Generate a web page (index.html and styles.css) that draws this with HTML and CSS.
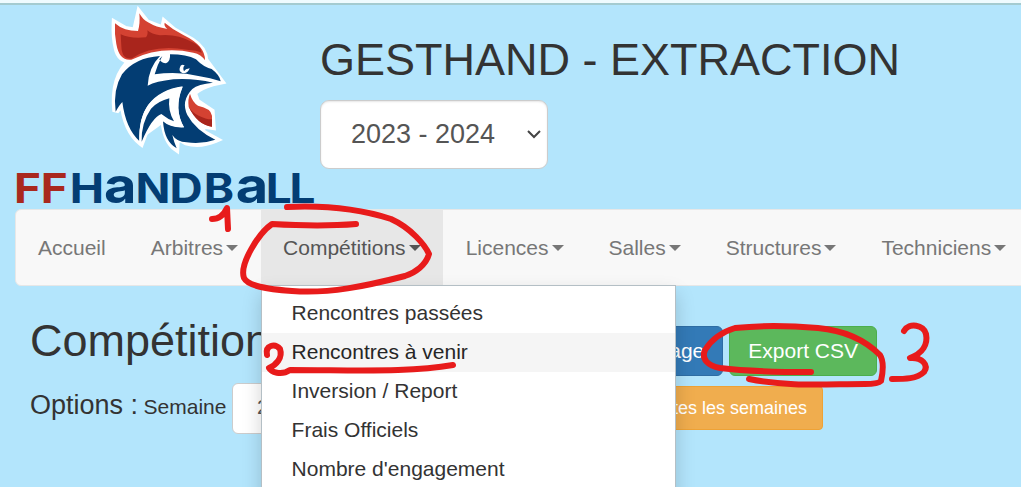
FILE: index.html
```html
<!DOCTYPE html>
<html lang="fr">
<head>
<meta charset="utf-8">
<title>Gesthand - Extraction</title>
<link rel="stylesheet" href="styles.css">
</head>
<body>
<div class="page">
  <header class="header">
    <svg class="logo" viewBox="0 0 300 204" role="img" aria-label="FFHandball">
      <g transform="translate(85 -5) scale(.33333)">
        <path class="halo" d="M45 70L76 88 106 93 118 40 140 68 190 87 194 68 222 92 275 122Q313 146 315 181L362 244 338 249Q302 259 280 278L290 305 334 335 337 380 315 377 300 365 308 398 346 419 Q300 438 258 426L230 410 228 445Q198 424 192 367L177 350 138 388 123 428Q77 392 68 306L47 334Q36 230 94 182 58 179 51 144 43 112 45 70Z"/>
        <path class="white" d="M160 170L300 180 360 245 280 275 265 300 310 400 190 370 120 420 70 300Z"/>
        <path class="red" d="M45 70Q58 82 76 88 92 93 114 93 121 70 118 40 129 60 144 67 168 82 202 87 191 78 194 68 218 89 250 105 316 137 315 181 304 163 280 158 182 137 94 179 58 184 49 132 43 103 45 70Z"/>
        <path class="darkred" d="M62 103Q91 117 138 112 145 103 142 91 155 103 180 106 230 101 278 127 302 138 305 158 291 151 260 149 160 132 96 175 65 180 64 138Z"/>
        <path class="blue" d="M180 168Q146 202 143 257 168 244 220 238 281 234 339 248 294 252 277 267 242 303 262 345 286 390 346 419 303 434 260 427 230 426 217 405 222 426 230 445 193 425 189 364 210 384 252 382 220 328 248 261 184 268 144 316 116 354 118 423 77 385 67 306 58 315 47 335 38 270 66 223 104 173 180 168Z"/>
        <path class="white" d="M248 259Q180 269 146 313 115 355 118 425L125 426Q125 369 153 326 175 303 208 295 203 332 222 364 204 358 184 342L188 362Q215 382 252 382 220 326 248 259Z"/>
        <path class="blue" d="M187 168Q173 192 164 223 233 212 299 229 330 233 362 244 360 226 335 207 311 202 288 178 260 163 210 163 212 184 198 190 185 190 178 178ZM208 295Q203 332 222 364 204 358 184 342 156 352 125 425 123 369 153 326 175 303 208 295Z"/>
        <path class="white" d="M254 196Q242 190 240 202 235 214 247 219 264 222 269 205L258 208 252 214Q247 204 254 196Z"/>
        <path class="red" d="M270 281Q277 306 294 317 333 325 336 347L336 380Q294 375 266 321 263 296 270 281Z"/>
        <path class="darkred" d="M266 320Q277 338 296 347 320 359 336 358L336 380Q292 375 266 320Z"/>
      </g>
      <text class="wordmark" y="198" transform="scale(1.12 1)"><tspan class="ff" x="-1 23">FF</tspan><tspan x="49">H</tspan><tspan class="low" x="79.500">a</tspan><tspan x="107.500 138 168.500">NDB</tspan><tspan class="low" x="197">a</tspan><tspan x="224 245">LL</tspan></text>
    </svg>
    <div class="heading">
      <h1 class="title">GESTHAND - EXTRACTION</h1>
      <div class="season">2023 - 2024
        <svg class="chevron" viewBox="0 0 14 9"><path d="M1 1L7 7 13 1"/></svg>
      </div>
    </div>
  </header>
  <nav class="navbar">
    <a class="nav-item">Accueil</a>
    <a class="nav-item">Arbitres<i class="caret"></i></a>
    <div class="nav-item open">Compétitions<i class="caret"></i>
      <div class="menu">
        <a class="menu-item">Rencontres passées</a>
        <a class="menu-item active">Rencontres à venir</a>
        <a class="menu-item">Inversion / Report</a>
        <a class="menu-item">Frais Officiels</a>
        <a class="menu-item">Nombre d'engagement</a>
      </div>
    </div>
    <a class="nav-item">Licences<i class="caret"></i></a>
    <a class="nav-item">Salles<i class="caret"></i></a>
    <a class="nav-item">Structures<i class="caret"></i></a>
    <a class="nav-item">Techniciens<i class="caret"></i></a>
  </nav>
  <main class="content">
    <div class="row">
      <h2 class="title section">Compétitions</h2>
      <div class="actions">
        <span class="btn primary">Affichage</span>
        <span class="btn success">Export CSV</span>
      </div>
    </div>
    <div class="row options">
      <div class="filter">
        <span class="options-label">Options :</span>
        <span class="field-label">Semaine</span>
        <span class="week">2</span>
      </div>
      <span class="btn warning">Toutes les semaines</span>
    </div>
  </main>
  <svg class="ink" viewBox="0 0 1021 487">
    <path d="M287 207C329 205 366 211 391 219C411 228 425 245 429 254C426 265 415 273 405 276C366 286 329 294 292 291C266 289 248 286 244 278C239 264 259 233 272 224C306 226 331 226 356 224"/>
    <path d="M212 219Q222 219 227 208L228 229"/>
    <path d="M267 355C265 345 275 343 280 349C283 358 276 365 269 368C271 372 281 376 290 370C330 370 366 371 398 370Q430 369 453 365"/>
    <path d="M811 372C778 372 744 371 720 368C708 366 701 359 705 350Q715 334 735 328C763 325 794 326 818 328C850 331 869 344 880 355Q885 363 881 381Q878 384 865 384C825 384 788 387 749 379"/>
    <path d="M904 331C909 322 924 325 926 334C928 344 923 353 910 358C922 357 929 365 924 372C917 379 905 379 892 379"/>
  </svg>
</div>
</body>
</html>
```

FILE: styles.css
```css
* { box-sizing: border-box; }
body {
  margin: 0;
  background: #b3e5fc;
  color: #333;
  font: 21px/30px "Liberation Sans", Arial, sans-serif;
}
.page {
  position: relative;
  width: 1021px;
  height: 487px;
  overflow: hidden;
  border-top: 3px solid #effbfe;
  padding-left: 15px;
}
.page::before {
  content: "";
  display: block;
  height: 2px;
  margin-left: -15px;
  background: #a4cbd0;
}
.header { display: flex; height: 204px; }
.logo { width: 300px; height: 204px; flex: none; overflow: visible; }
.halo { fill: #fff; stroke: #fff; stroke-width: 20px; stroke-linejoin: miter; stroke-miterlimit: 2.5; }
.white { fill: #fff; }
.red { fill: #d44232; }
.darkred { fill: #a9251c; }
.blue { fill: #033d73; }
.wordmark { font: 700 41px Inter, sans-serif; fill: #033d73; }
.ff { fill: #a9281e; }
.low { font-size: 50px; }
.heading { padding: 30px 0 0 5px; }
.title { margin: 0; font-size: 45px; line-height: 50px; font-weight: 400; white-space: nowrap; }
.section { margin-top: -10px; }
.season {
  display: flex;
  align-items: center;
  justify-content: space-between;
  width: 228px;
  height: 69px;
  margin-top: 15px;
  padding: 0 6px 2px 30px;
  border: 1px solid #ccc;
  border-radius: 9px;
  background: #fff;
  box-shadow: inset 0 1px 2px rgba(0, 0, 0, .1);
  color: #555;
  font-size: 27px;
}
.chevron { width: 14px; height: 9px; margin-top: 2px; fill: none; stroke: #444; stroke-width: 2px; }
.navbar {
  display: flex;
  width: 1100px;
  height: 77px;
  border: 1px solid #e7e7e7;
  border-radius: 6px;
  background: #f8f8f8;
}
.nav-item {
  position: relative;
  display: flex;
  align-items: center;
  padding: 0 22.5px;
  height: 75px;
  color: #777;
}
.nav-item:first-child { padding-left: 22px; }
.open { background: #e7e7e7; color: #555; }
.caret {
  margin-left: 3px;
  border: 6px solid transparent;
  border-top-color: currentColor;
  border-bottom: 0;
}
.menu {
  position: absolute;
  top: 75px;
  left: 0;
  z-index: 1;
  width: 415px;
  height: 240px;
  padding-top: 8px;
  border: 1px solid #b4bfc5;
  background: #fff;
  box-shadow: 0 9px 18px rgba(0, 0, 0, .175);
}
.menu-item { display: block; height: 39px; padding: 4px 30px; color: #333; }
.active { background: #f5f5f5; color: #262626; }
.content { width: 862px; padding: 30px 0 0 15px; }
.row { display: flex; justify-content: space-between; align-items: flex-start; margin-top: 10px; }
.actions { display: flex; gap: 6px; }
.btn {
  height: 50px;
  padding: 9px 18px;
  border: 1px solid;
  border-radius: 6px;
  color: #fff;
}
.primary { background: #337ab7; border-color: #2e6da4; }
.success { background: #5cb85c; border-color: #4cae4c; }
.warning {
  height: 44px;
  padding: 6px 15px;
  background: #f0ad4e;
  border-color: #eea236;
  border-radius: 4px;
  font-size: 18px;
}
.options { width: 793px; }
.filter { display: flex; align-items: baseline; gap: 5.5px; margin-top: -3px; }
.options-label { font-size: 27px; }
.week {
  width: 120px;
  height: 51px;
  padding: 8px 24px;
  border: 1px solid #ccc;
  border-radius: 6px;
  background: #fff;
  color: #555;
}
.ink {
  position: absolute;
  top: -3px;
  left: 0;
  z-index: 2;
  width: 1021px;
  height: 487px;
  fill: none;
  stroke: #e81b1b;
  stroke-width: 6px;
  stroke-linecap: round;
  stroke-linejoin: round;
}
```
